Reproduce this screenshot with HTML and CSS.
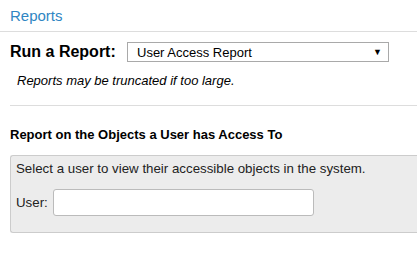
FILE: index.html
```html
<!DOCTYPE html>
<html lang="en">
<head>
<meta charset="UTF-8">
<title>Reports</title>
<link rel="stylesheet" href="styles.css">
</head>
<body>
<div class="page">
  <!-- header -->
  <div class="crumbs"><a href="#">Reports</a></div>

  <div class="run-row">
    <label for="reportType">Run a Report:</label>
    <div class="select-box" id="reportType">
      <span>User Access Report</span>
      <span class="arrow">&#9660;</span>
    </div>
  </div>
  <p class="note">Reports may be truncated if too large.</p>

  <div class="section">
    <h4>Report on the Objects a User has Access To</h4>
    <div class="panel">
      <p>Select a user to view their accessible objects in the system.</p>
      <div class="field">
        <label for="userInput">User:</label>
        <input type="text" id="userInput">
      </div>
    </div>
  </div>
</div>
</body>
</html>
```

FILE: styles.css
```css
body {
  font-family: 'Liberation Sans', Arial, sans-serif;
  margin: 0;
  overflow: hidden;
  background: #fff;
  color: #000;
}
.page {
  width: 100%;
}
.crumbs {
  height: 32px;
  border-bottom: 1px solid #ddd;
  padding-left: 10px;
  box-sizing: border-box;
}
.crumbs a {
  display: block;
  padding-top: 7px;
  font-size: 15px;
  color: #2f86c3;
  text-decoration: none;
}
.run-row {
  display: flex;
  align-items: center;
  margin: 10px 0 0 10px;
  height: 20px;
}
.run-row label {
  font-size: 16px;
  font-weight: bold;
  width: 117px;
}
.select-box {
  width: 262px;
  height: 20px;
  box-sizing: border-box;
  border: 1px solid #a9a9a9;
  display: flex;
  align-items: center;
  justify-content: space-between;
  padding: 0 6px 0 9px;
  font-size: 13px;
}
.arrow {
  font-size: 9px;
}
.note {
  margin: 11px 0 0 17px;
  font-size: 13px;
  font-style: italic;
  height: 20px;
}
.section {
  margin: 12px 0 0 10px;
  border-top: 1px solid #ddd;
  padding-top: 21px;
}
h4 {
  margin: 0 0 13px;
  font-size: 13px;
  font-weight: bold;
}
.panel {
  background: #ececec;
  border: 1px solid #ccc;
  border-right: none;
  border-radius: 3px 0 0 3px;
  padding: 5px 5px 14px;
  height: 78px;
  box-sizing: border-box;
}
.panel p {
  margin: 0;
  font-size: 13.3px;
  color: #222;
}
.field {
  display: flex;
  align-items: center;
  margin-top: 13px;
}
.field label {
  font-size: 13.3px;
  width: 37px;
  color: #222;
}
.field input {
  width: 261px;
  height: 27px;
  box-sizing: border-box;
  border: 1px solid #bbb;
  border-radius: 3px;
  background: #fff;
  font-size: 13px;
}
```
